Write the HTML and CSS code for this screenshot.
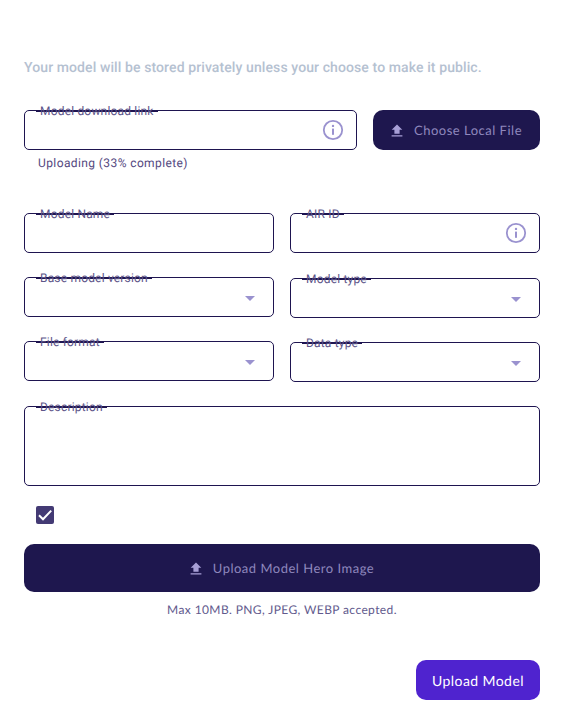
FILE: index.html
```html
<!DOCTYPE html>
<html lang="en">
<head>
<meta charset="utf-8">
<title>Upload Model</title>
<link rel="stylesheet" href="styles.css">
</head>
<body>
<main class="page">
  <p class="intro">Your model will be stored privately unless your choose to make it public.</p>

  <div class="link-row">
    <div class="field grow">
      <span class="label">Model download link</span>
      <svg class="info" viewBox="0 0 22 22"><circle cx="11" cy="11" r="9.2"/><circle class="dot" cx="11" cy="6.9" r="1.2"/><rect class="dot" x="10" y="9.6" width="2" height="6.2"/></svg>
    </div>
    <button class="btn dark local" type="button">
      <svg class="up" viewBox="0 0 12 13"><path d="M6 .4 11.3 5.8H8.6V9.8H3.4V5.8H.7ZM.6 11.3h10.8v1.3H.6Z"/></svg>
      Choose Local File
    </button>
  </div>
  <p class="status">Uploading (33% complete)</p>

  <div class="columns">
    <div class="col">
      <div class="field"><span class="label">Model Name</span></div>
      <div class="field"><span class="label">Base model version</span><i class="caret"></i></div>
      <div class="field"><span class="label">File format</span><i class="caret"></i></div>
    </div>
    <div class="col">
      <div class="field"><span class="label">AIR ID</span>
        <svg class="info" viewBox="0 0 22 22"><circle cx="11" cy="11" r="9.2"/><circle class="dot" cx="11" cy="6.9" r="1.2"/><rect class="dot" x="10" y="9.6" width="2" height="6.2"/></svg>
      </div>
      <div class="field shift"><span class="label">Model type</span><i class="caret"></i></div>
      <div class="field"><span class="label">Data type</span><i class="caret"></i></div>
    </div>
  </div>

  <div class="field area"><span class="label">Description</span></div>

  <div class="check">
    <svg viewBox="0 0 18 18"><path d="M3 9.3 7 13.3 15.2 4.6"/></svg>
  </div>

  <button class="btn dark hero" type="button">
    <svg class="up" viewBox="0 0 12 13"><path d="M6 .4 11.3 5.8H8.6V9.8H3.4V5.8H.7ZM.6 11.3h10.8v1.3H.6Z"/></svg>
    Upload Model Hero Image
  </button>
  <p class="caption">Max 10MB. PNG, JPEG, WEBP accepted.</p>

  <div class="actions">
    <button class="btn primary" type="button">Upload Model</button>
  </div>
</main>
</body>
</html>
```

FILE: styles.css
```css
* { box-sizing: border-box; }
html, body { margin: 0; background: #fff; }
.page { width: 564px; height: 724px; padding: 60px 24px 0; font-family: Roboto, sans-serif; overflow: hidden; text-rendering: geometricPrecision; }
.intro { margin: 0; height: 17px; line-height: 17px; font-size: 14px; font-weight: 500; color: #b5c1d1; letter-spacing: 0.1px; white-space: nowrap; }
.link-row { display: flex; gap: 16px; margin-top: 33px; }
.grow { flex: 1; }
.field { position: relative; height: 40px; border: 1px solid #1e1450; border-radius: 5px; background: #fff; }
.label { position: absolute; left: 11px; top: -1px; height: 2px; padding: 0 4px; background: #1e1450; font-size: 12px; line-height: 3px; color: #5d5589; letter-spacing: 0.18px; white-space: nowrap; }
.info { position: absolute; right: 12px; top: 8px; width: 22px; height: 22px; fill: none; stroke: #9a92cf; stroke-width: 1.8; }
.info .dot { fill: #9a92cf; stroke: none; }
.btn { display: flex; align-items: center; justify-content: center; border: 0; padding: 0; font-family: Lato, sans-serif; font-size: 14px; text-rendering: geometricPrecision; }
.dark { background: #1e174e; color: #8f88bd; font-size: 13px; letter-spacing: 0.5px; gap: 11px; }
.local { width: 167px; height: 40px; border-radius: 10px; }
.hero { width: 516px; height: 48px; margin-top: 20px; border-radius: 10px; }
.up { width: 12px; height: 13px; fill: #a79fd6; }
.status { margin: 5px 0 0 14px; height: 16px; line-height: 16px; font-size: 12px; color: #55497f; letter-spacing: 0.4px; }
.columns { display: grid; grid-template-columns: 250px 250px; gap: 16px; margin-top: 42px; }
.col { display: flex; flex-direction: column; gap: 24px; }
.shift { margin-top: 1px; }
.caret { position: absolute; right: 18px; top: 18px; width: 0; height: 0; border-left: 5px solid transparent; border-right: 5px solid transparent; border-top: 5px solid #9a92cf; }
.area { height: 80px; margin-top: 24px; }
.check { width: 18px; height: 18px; margin: 20px 0 0 12px; border-radius: 2px; background: #433a74; }
.check svg { display: block; width: 18px; height: 18px; fill: none; stroke: #fff; stroke-width: 2; }
.caption { margin: 10px 0 0; height: 16px; line-height: 16px; text-align: center; font-family: Lato, sans-serif; font-size: 12px; color: #625a8d; letter-spacing: 0.39px; }
.actions { display: flex; justify-content: flex-end; margin-top: 42px; }
.primary { width: 124px; height: 40px; border-radius: 10px; background: #4f23cf; color: #fff; letter-spacing: 0.42px; }
```
